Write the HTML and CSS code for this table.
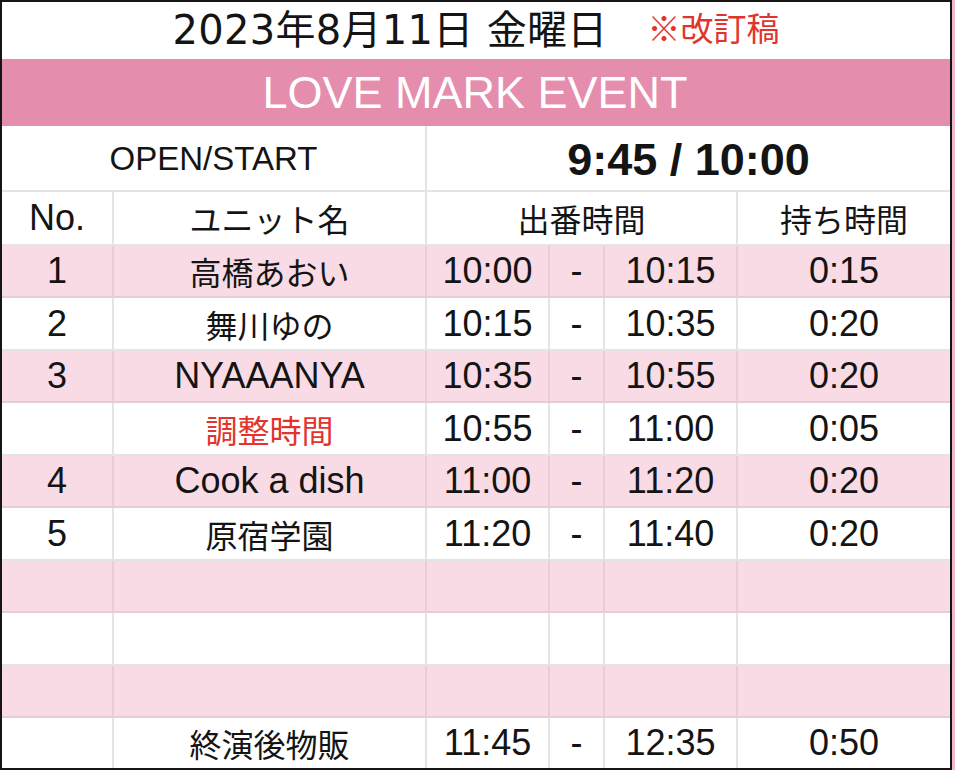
FILE: index.html
```html
<!DOCTYPE html>
<html lang="ja">
<head>
<meta charset="utf-8">
<title>LOVE MARK EVENT タイムテーブル</title>
<link rel="stylesheet" href="styles.css">
</head>
<body>
<div class="sheet">
  <div class="title-row">
    <span class="date">2023年8月11日 金曜日</span>
    <span class="revised">※改訂稿</span>
  </div>
  <div class="event-row">LOVE MARK EVENT</div>
  <div class="row open-row">
    <div class="cell span2 open-label">OPEN/START</div>
    <div class="cell span4 open-time">9:45 / 10:00</div>
  </div>
  <div class="row head-row">
    <div class="cell">No.</div>
    <div class="cell ja">ユニット名</div>
    <div class="cell span3 ja">出番時間</div>
    <div class="cell ja">持ち時間</div>
  </div>
  <div class="row pink">
    <div class="cell">1</div>
    <div class="cell ja">高橋あおい</div>
    <div class="cell">10:00</div>
    <div class="cell">-</div>
    <div class="cell">10:15</div>
    <div class="cell">0:15</div>
  </div>
  <div class="row">
    <div class="cell">2</div>
    <div class="cell ja">舞川ゆの</div>
    <div class="cell">10:15</div>
    <div class="cell">-</div>
    <div class="cell">10:35</div>
    <div class="cell">0:20</div>
  </div>
  <div class="row pink">
    <div class="cell">3</div>
    <div class="cell">NYAAANYA</div>
    <div class="cell">10:35</div>
    <div class="cell">-</div>
    <div class="cell">10:55</div>
    <div class="cell">0:20</div>
  </div>
  <div class="row">
    <div class="cell"></div>
    <div class="cell ja red">調整時間</div>
    <div class="cell">10:55</div>
    <div class="cell">-</div>
    <div class="cell">11:00</div>
    <div class="cell">0:05</div>
  </div>
  <div class="row pink">
    <div class="cell">4</div>
    <div class="cell">Cook a dish</div>
    <div class="cell">11:00</div>
    <div class="cell">-</div>
    <div class="cell">11:20</div>
    <div class="cell">0:20</div>
  </div>
  <div class="row">
    <div class="cell">5</div>
    <div class="cell ja">原宿学園</div>
    <div class="cell">11:20</div>
    <div class="cell">-</div>
    <div class="cell">11:40</div>
    <div class="cell">0:20</div>
  </div>
  <div class="row pink">
    <div class="cell"></div><div class="cell"></div><div class="cell"></div><div class="cell"></div><div class="cell"></div><div class="cell"></div>
  </div>
  <div class="row">
    <div class="cell"></div><div class="cell"></div><div class="cell"></div><div class="cell"></div><div class="cell"></div><div class="cell"></div>
  </div>
  <div class="row pink">
    <div class="cell"></div><div class="cell"></div><div class="cell"></div><div class="cell"></div><div class="cell"></div><div class="cell"></div>
  </div>
  <div class="row last">
    <div class="cell"></div>
    <div class="cell ja">終演後物販</div>
    <div class="cell">11:45</div>
    <div class="cell">-</div>
    <div class="cell">12:35</div>
    <div class="cell">0:50</div>
  </div>
</div>
</body>
</html>
```
FILE: styles.css
```css
html, body {
  margin: 0;
  padding: 0;
}
body {
  background: #eeb9cf;
  width: 955px;
  height: 770px;
  overflow: hidden;
  font-family: "Liberation Sans", "Noto Sans CJK JP", sans-serif;
  color: #141414;
}
.sheet {
  width: 948px;
  height: 766px;
  border: 2px solid #151515;
  background: #ffffff;
  display: flex;
  flex-direction: column;
}
.title-row {
  height: 57px;
  box-sizing: border-box;
  display: flex;
  align-items: center;
  justify-content: center;
  gap: 40px;
  padding-bottom: 8px;
}
.date {
  font-family: "DejaVu Sans", "Noto Sans CJK JP", sans-serif;
  font-size: 40px;
  letter-spacing: 0.3px;
}
.revised {
  font-family: "Noto Sans CJK JP", sans-serif;
  font-size: 33px;
  color: #e2342e;
}
.event-row {
  height: 67px;
  background: #e58dad;
  color: #ffffff;
  font-size: 45px;
  display: flex;
  align-items: center;
  justify-content: center;
  padding-right: 2px;
}
.row {
  display: grid;
  grid-template-columns: 110px 313px 123px 55px 133px 1fr;
  box-sizing: border-box;
  height: 53px;
  border-bottom: 2px solid #e4e4e4;
  font-size: 36px;
}
.row.pink {
  height: 52px;
  background: #f8dbe5;
  border-bottom-color: #e6ccd5;
}
.row.last {
  border-bottom: 0;
  flex: 1;
}
.cell {
  display: flex;
  align-items: center;
  justify-content: center;
  border-left: 2px solid #e4e4e4;
  white-space: nowrap;
}
.row.pink .cell {
  border-left-color: #e8cdd6;
}
.cell:first-child {
  border-left: 0;
}
.span2 { grid-column: span 2; }
.span3 { grid-column: span 3; }
.span4 { grid-column: span 4; }
.row.open-row {
  height: 66px;
}
.open-label {
  font-size: 33px;
  padding-top: 2px;
}
.open-time {
  font-size: 45px;
  font-weight: bold;
  padding-top: 3px;
}
.row.head-row {
  height: 54px;
}
.head-row .cell {
  font-size: 36px;
}
.row .ja {
  font-family: "Noto Sans CJK JP", sans-serif;
  font-size: 32px;
}
.red {
  color: #e2342e;
}
```
